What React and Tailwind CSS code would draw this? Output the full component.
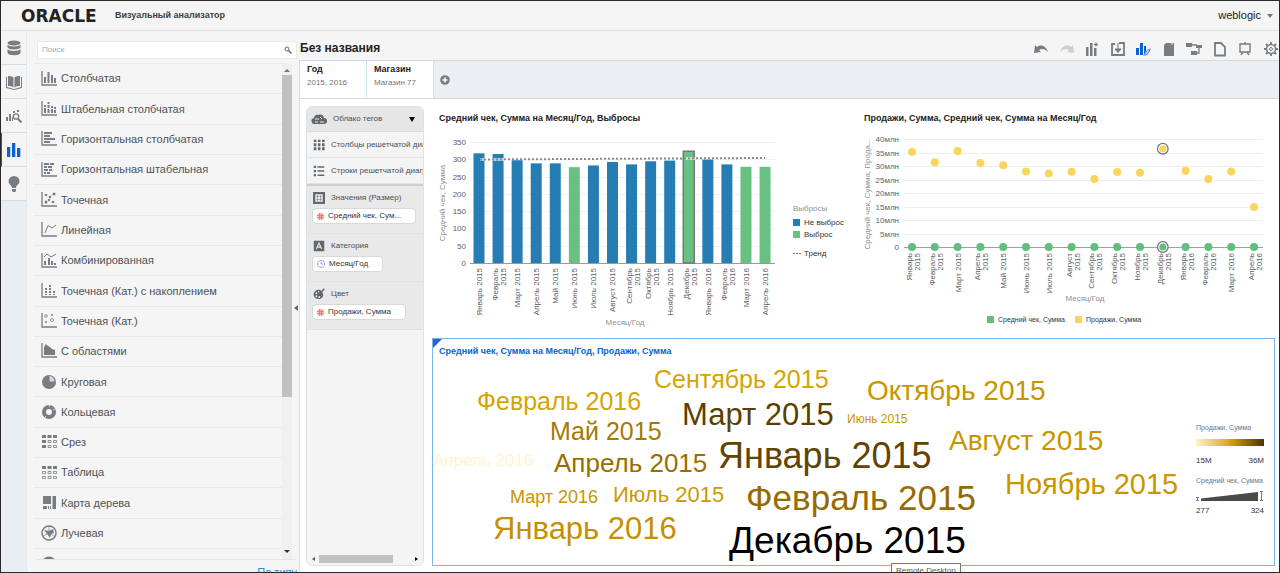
import { useState } from 'react';
import clsx from 'clsx';

const AXIS = <path d="M1 0v14h15" fill="none" stroke="currentColor" strokeWidth="1.3" />;

const ICONS = {
    bar: <>{AXIS}<path d="M3 6h2v6H3zM6.500 1h2v11h-2zM10 4h2v8h-2zM13 7h2v5h-2z" /></>,
    stackedBar: <>{AXIS}<path d="M3 4h2v2H3zM3 7h2v5H3zM6.500 1h2v2h-2zM6.500 4h2v3h-2zM6.500 8h2v4h-2zM10 5h2v2h-2zM10 8h2v4h-2zM13 6h2v2h-2zM13 9h2v3h-2z" /></>,
    hBar: <>{AXIS}<path d="M3 1h8v2H3zM3 4h6v2H3zM3 7h11v2H3zM3 10h6v2H3z" /></>,
    hStackedBar: <>{AXIS}<path d="M3 1h5v2H3zM9 1h4v2H9zM3 4h3v2H3zM7 4h4v2H7zM3 7h4v2H3zM8 7h3v2H8zM3 10h2v2H3zM6 10h3v2H6z" /></>,
    scatter: <>{AXIS}<circle cx="5" cy="3" r="1.300" /><circle cx="9" cy="5" r="1.300" /><circle cx="13" cy="2" r="1.500" /><circle cx="5" cy="10" r="1.500" /><circle cx="8" cy="8" r="1.200" /><circle cx="12" cy="10" r="1.300" /></>,
    line: <>{AXIS}<path d="M4 11 7 3.500 11 6l4-3" fill="none" stroke="currentColor" /></>,
    combo: <>{AXIS}<path d="M3 8h2v4H3zM7 5h2v7H7zM10 8h2v4h-2zM13 10h2v2h-2z" /><path d="m3 4 3-3 4 3 5-3" fill="none" stroke="currentColor" /></>,
    dotStack: <>{AXIS}<path d="M4 5h2v2H4zM4 8h2v2H4zM4 11h2v1H4zM8 2h2v2H8zM8 5h2v2H8zM8 8h2v2H8zM8 11h2v1H8zM12 8h2v2h-2zM12 11h2v1h-2z" /></>,
    dotCat: <>{AXIS}<g fill="none" stroke="currentColor" strokeWidth=".8"><circle cx="5" cy="3" r="1.300" /><circle cx="5" cy="9" r=".8" /><circle cx="11" cy="2" r=".8" /><circle cx="11" cy="7" r="1.500" /></g></>,
    area: <>{AXIS}<path d="M3 12V4l2-3 2 2 2 1 2 2 3 1v5z" /></>,
    pie: <><circle cx="8" cy="8" r="7" /><path d="M8.500 7.500V2a5.500 5.500 0 0 1 5 5.500z" fill="#d5dadc" /></>,
    donut: <><circle cx="8" cy="8" r="5" fill="none" stroke="currentColor" strokeWidth="4" /><path d="m8 3 .5-2M12 6l3-2M5 12l-2 2" stroke="#d5dadc" /></>,
    pivot: <><path d="M1 1h4v3H1zM6.500 1h4v3h-4zM12 1h4v3h-4zM1 6h4v3H1zM1 11h4v3H1z" /><g fill="none" stroke="currentColor" strokeWidth=".8"><path d="M7 6.500h3v2H7zM12.500 6.500h3v2h-3zM7 11.500h3v2H7zM12.500 11.500h3v2h-3z" /></g></>,
    table: <><path d="M1 1h4v3H1zM6.500 1h4v3h-4zM12 1h4v3h-4z" /><g fill="none" stroke="currentColor" strokeWidth=".8"><path d="M1.500 6.500h3v2h-3zM7 6.500h3v2H7zM12.500 6.500h3v2h-3zM1.500 11.500h3v2h-3zM7 11.500h3v2H7zM12.500 11.500h3v2h-3z" /></g></>,
    treemap: <path d="M2 1h8v8H2zM11.500 1H15v13h-3.500zM2 11h4v3H2zM7 11h1v3H7zM9 11h1v3H9z" />,
    radar: <><circle cx="8" cy="8" r="7" fill="none" stroke="currentColor" strokeWidth="1.500" /><path d="m3 5 5 1 4-2 1 4-3 1-1 4-3-4z" /><path d="M8 1v5M2 11l4-2M14 12l-4-3" stroke="currentColor" strokeWidth=".7" /></>,
    map: <circle cx="8" cy="8" r="6" fill="none" stroke="currentColor" strokeWidth="3" />,

    database: <><ellipse cx="8" cy="3" rx="6.500" ry="2.500" /><path d="M1.500 4.500c1 2.500 12 2.500 13 0V7.500c-1 2.500-12 2.500-13 0zM1.500 9c1 2.500 12 2.500 13 0v4c-1 3-12 3-13 0z" /></>,
    book: <><path d="M0 3h1v10l7 2 7-2V3h1v11L8 16l-8-2z" /><path d="M2 2q4-.5 5.500 1.500v10Q6 11.500 2 12zM14 2q-4-.5-5.500 1.500v10Q10 11.500 14 12z" /></>,
    explore: <><path d="M0 9h2v4H0zM3 6h2v7H3zM6 9h1v4H6zM7 3h2v2H7zM11 2h2v2h-2z" /><circle cx="10" cy="8.500" r="2.700" fill="none" stroke="currentColor" strokeWidth="1.300" /><path d="m12 11 3.500 3.500" stroke="currentColor" strokeWidth="2" /></>,
    visuals: <path d="M1 5h3.300v10H1zM6 1h3.300v14H6zM11 6h3.300v9H11z" />,
    bulb: <path d="M8 0a5.500 5.500 0 0 0-5.500 5.500C2.500 8.500 6 9 6 12h4c0-3 3.500-3.500 3.500-6.500A5.500 5.500 0 0 0 8 0zM6 13h4v2l-1 1H7l-1-1z" />,

    undo: <path d="m1 12 1-8 2 2c4-3 9-1 11 5-3-3-6-4-9-2l2 2z" />,
    redo: <path d="m15 12-1-8-2 2C8 3 3 5 1 11c3-3 6-4 9-2l-2 2z" />,
    addVisual: <><path d="M2 6h2.500v9H2zM6 2h2.500v13H6zM10 7h2.500v8H10z" /><path d="M12 1.500v4M10 3.500h4" stroke="currentColor" strokeWidth="1.300" /></>,
    layout: <><path d="M5 3H2v11h12V2H9" fill="none" stroke="currentColor" strokeWidth="1.800" /><path d="M8 2v7M5 8l3 3.500L11 8z" stroke="currentColor" /></>,
    brush: <><path d="M1 7h3v7H1zM5 2h3v12H5zM9 5h2v5l-2 4z" /><path d="M9 14q4-6 6-6-1 4-4 6z" fill="none" stroke="#5d96e0" strokeWidth="1.200" /></>,
    clipboard: <><path d="M3 4l2-2h8v13H3z" /><path d="M6 1h5v3" fill="none" stroke="#f5f5f5" /></>,
    flow: <><path d="M0 2h6v4H0zM10 4h6v3h-6zM5 10h6v4H5z" /><path d="M5 4h6M13 6v6h-3" stroke="currentColor" fill="none" strokeWidth="1.300" /></>,
    page: <path d="M3 2h6l4 4v8.500H3z" fill="none" stroke="currentColor" strokeWidth="1.800" />,
    present: <><path d="M3 3h10v8H3z" fill="none" stroke="currentColor" strokeWidth="1.400" /><path d="M8 1v2M6 11l-2 3M10 11l2 3" stroke="currentColor" strokeWidth="1.400" /></>,
    gear: <><circle cx="8" cy="8" r="4.500" fill="none" stroke="currentColor" strokeWidth="1.500" /><circle cx="8" cy="8" r="1.500" fill="none" stroke="currentColor" /><path d="M8 1v2M8 13v2M1 8h2M13 8h2M3 3l1.500 1.500M11.500 11.500 13 13M13 3l-1.500 1.500M4.500 11.500 3 13" stroke="currentColor" strokeWidth="1.800" /></>,

    cloud: <><path d="M4 13a3 3 0 0 1-1-6 3 3 0 0 1 4-3 4 4 0 0 1 6 3 3 3 0 0 1 0 6z" /><path d="M4 8h4M9 6l2 2M4 11h3M9 11h4" stroke="#e8e8e8" strokeWidth="1" /></>,
    columns: <path d="M1 1h3.500v3H1zM6.500 1H10v3H6.500zM12 1h3.500v3H12zM1 5.500h3.500v4H1zM6.500 5.500H10v4H6.500zM12 5.500h3.500v4H12zM1 11h3.500v4H1zM6.500 11H10v4H6.500zM12 11h3.500v4H12z" />,
    rows: <path d="M1 1h3v3H1zM6 1.500h9v2H6zM1 6.500h3v3H1zM6 7h9v2H6zM1 12h3v3H1zM6 12.500h9v2H6z" />,
    size: <><path d="M1.500 1.500h13v13h-13z" fill="none" stroke="currentColor" strokeWidth="3" /><path d="M6 4v8M10 4v8M4 6h8M4 10h8" stroke="currentColor" strokeWidth=".6" /></>,
    category: <><path d="M1 1h14v14H1z" /><path d="m4.500 12 3.500-8 3.500 8M6 9.500h4" fill="none" stroke="#ececec" strokeWidth="1.400" /></>,
    palette: <><path d="M10 3C5 1 0 5 1 10c1 5 8 6 11 3 2-2 2-4 1-6z" /><path d="m15 1-7 8" stroke="currentColor" strokeWidth="2" /><g fill="#ececec"><circle cx="4.500" cy="7" r="1.200" /><circle cx="4.500" cy="11" r="1.200" /><circle cx="8.500" cy="12" r="1.200" /><circle cx="7.500" cy="5" r="1" /></g></>,
};

function Icon({ name, className }) {
    return (
        <svg viewBox="0 0 16 16" fill="currentColor" className={clsx('shrink-0', className)} aria-hidden="true">
            {ICONS[name]}
        </svg>
    );
}

const RAIL = [
    ['database', 'Данные'],
    ['book', 'Каталог'],
    ['explore', 'Исследование'],
    ['visuals', 'Визуализации'],
    ['bulb', 'Подсказки'],
];

const CHART_TYPES = [
    ['bar', 'Столбчатая'],
    ['stackedBar', 'Штабельная столбчатая'],
    ['hBar', 'Горизонтальная столбчатая'],
    ['hStackedBar', 'Горизонтальная штабельная'],
    ['scatter', 'Точечная'],
    ['line', 'Линейная'],
    ['combo', 'Комбинированная'],
    ['dotStack', 'Точечная (Кат.) с накоплением'],
    ['dotCat', 'Точечная (Кат.)'],
    ['area', 'С областями'],
    ['pie', 'Круговая'],
    ['donut', 'Кольцевая'],
    ['pivot', 'Срез'],
    ['table', 'Таблица'],
    ['treemap', 'Карта дерева'],
    ['radar', 'Лучевая'],
];

const TOOLBAR = ['undo', 'redo', 'addVisual', 'layout', 'brush', 'clipboard', 'flow', 'page', 'present', 'gear'];

// month, year, average check, sales (mln)
const DATA = [
    ['Январь', 2015, 317, 35.2],
    ['Февраль', 2015, 315, 31.4],
    ['Март', 2015, 297, 35.6],
    ['Апрель', 2015, 288, 31.1],
    ['Май', 2015, 288, 30.3],
    ['Июнь', 2015, 277, 28],
    ['Июль', 2015, 282, 27.2],
    ['Август', 2015, 292, 27.9],
    ['Сентябрь', 2015, 285, 25.2],
    ['Октябрь', 2015, 294, 27.8],
    ['Ноябрь', 2015, 296, 27.5],
    ['Декабрь', 2015, 323, 36.4],
    ['Январь', 2016, 299, 28.2],
    ['Февраль', 2016, 285, 25.2],
    ['Март', 2016, 278, 28],
    ['Апрель', 2016, 278, 14.8],
];

const SELECTED = 11;
const OUTLIERS = [5, 11, 14, 15];

// text, x, baseline, size, colour
const CLOUD = [
    ['Сентябрь 2015', 221, 29, 25, '#d6a400'],
    ['Октябрь 2015', 434, 41, 28, '#c89400'],
    ['Февраль 2016', 44, 51, 25, '#d6a400'],
    ['Март 2015', 249, 66, 31, '#5a3f00'],
    ['Июнь 2015', 414, 64, 12, '#c89400'],
    ['Май 2015', 117, 81, 25, '#a87800'],
    ['Январь 2015', 285, 109, 36, '#604400'],
    ['Август 2015', 516, 91, 28, '#c89400'],
    ['Апрель 2016', 0, 107, 17, '#fff3d0'],
    ['Апрель 2015', 121, 113, 26, '#9a6e00'],
    ['Март 2016', 77, 144, 18, '#c89400'],
    ['Июль 2015', 180, 143, 22, '#cc9900'],
    ['Февраль 2015', 313, 151, 35, '#966b00'],
    ['Ноябрь 2015', 572, 135, 29, '#c99500'],
    ['Январь 2016', 60, 180, 31, '#c68f00'],
    ['Декабрь 2015', 296, 194, 37, '#000000'],
];

function MonthLabel({ x, y, month, year, wrap }) {
    if (!wrap) {
        return (
            <text transform={`translate(${x + 3} ${y}) rotate(-90)`} textAnchor="end">{month} {year}</text>
        );
    }
    return (
        <g transform={`translate(${x} ${y}) rotate(-90)`} textAnchor="end">
            <text>{month}</text>
            <text y="8">{year}</text>
        </g>
    );
}

function BarChart() {
    const y = (v) => 135 - v * 0.346;
    const x = (i) => 47 + i * 19.07;
    const wrapped = [1, 8, 9, 11, 13];

    return (
        <svg viewBox="0 0 425 206" className="block w-full" fontSize="8" fill="#5c6166">
            {[0, 50, 100, 150, 200, 250, 300, 350].map((v) => (
                <g key={v}>
                    <path d={`M38 ${Math.round(y(v)) + 0.5}H343`} stroke={v ? '#eef1f3' : '#9a9a9a'} />
                    <text x="34" y={y(v) + 3} textAnchor="end">{v}</text>
                </g>
            ))}
            {DATA.map(([month, year, check], i) => (
                <g key={i}>
                    <rect
                        x={x(i) - 5.5}
                        y={y(check)}
                        width="11"
                        height={135 - y(check)}
                        fill={OUTLIERS.includes(i) ? '#68c182' : '#267db3'}
                        stroke={i === SELECTED ? '#777777' : 'none'}
                        strokeWidth="1.5"
                    />
                    <MonthLabel x={x(i)} y={140} month={month} year={year} wrap={wrapped.includes(i)} />
                </g>
            ))}
            <path d="M48 31.500h29M253 30.500h10" stroke="#ffffff" strokeWidth="3" opacity=".6" />
            <path d="M48 31.500 333 30" stroke="#8a8a8a" strokeWidth="2" strokeDasharray="2 2" />
            <g fill="#8d9297">
                <text x="193" y="197" textAnchor="middle">Месяц/Год</text>
                <text transform="translate(13 75) rotate(-90)" textAnchor="middle">Средний чек, Сумма</text>
                <text x="361" y="83">Выбросы</text>
            </g>
            <g fill="#333333">
                <rect x="361" y="91" width="7" height="7" fill="#267db3" />
                <text x="372" y="97">Не выброс</text>
                <rect x="361" y="103" width="7" height="7" fill="#68c182" />
                <text x="372" y="109">Выброс</text>
                <path d="M361 125.500h8" stroke="#777777" strokeDasharray="2 1" />
                <text x="372" y="128">Тренд</text>
            </g>
        </svg>
    );
}

function DotChart() {
    const y = (v) => 119 - v * 2.7;
    const x = (i) => 55 + i * 22.8;
    const single = [2, 4, 5, 6, 14];

    return (
        <svg viewBox="0 0 418 206" className="block w-full" fontSize="8" fill="#5c6166">
            {[0, 5, 10, 15, 20, 25, 30, 35, 40].map((v) => (
                <g key={v}>
                    <path d={`M47 ${Math.round(y(v)) + 0.5}H406`} stroke={v ? '#eaeff2' : '#a0a0a0'} />
                    <text x="42" y={y(v) + 3} textAnchor="end">{v ? `${v}млн` : 0}</text>
                </g>
            ))}
            {DATA.map(([month, year, , sales], i) => (
                <g key={i}>
                    {i === SELECTED && (
                        <g fill="#ffffff" stroke="#777777" strokeWidth="1.3">
                            <circle cx={x(i)} cy={y(sales)} r="5.3" />
                            <circle cx={x(i)} cy="119" r="5.3" />
                        </g>
                    )}
                    <circle cx={x(i)} cy={y(sales)} r={i === SELECTED ? 3.5 : 4} fill="#fad55c" />
                    <circle cx={x(i)} cy="119" r={i === SELECTED ? 3.5 : 4} fill="#5fbf7b" />
                    <MonthLabel x={x(i)} y={125} month={month} year={year} wrap={!single.includes(i)} />
                </g>
            ))}
            <g fill="#8d9297">
                <text x="228" y="173" textAnchor="middle">Месяц/Год</text>
                <text transform="translate(13 66) rotate(-90)" textAnchor="middle">Средний чек, Сумма, Прода...</text>
            </g>
            <g fill="#333333" fontSize="7">
                <rect x="130" y="188" width="7" height="7" fill="#5fbf7b" />
                <text x="141" y="194">Средний чек, Сумма</text>
                <rect x="218" y="188" width="7" height="7" fill="#fad55c" />
                <text x="229" y="194">Продажи, Сумма</text>
            </g>
        </svg>
    );
}

function TagCloud() {
    return (
        <section className="relative flex min-h-0 flex-1 flex-col border border-[#7cb5ea]">
            <svg viewBox="0 0 9 9" className="absolute left-0 top-0 size-[9px]" aria-hidden="true">
                <path d="M0 0h9L0 9z" fill="#2b63d3" />
            </svg>
            <h2 className="px-1.5 pt-1.5 text-[9px] leading-3 font-bold text-[#0b62c4]">
                Средний чек, Сумма на Месяц/Год, Продажи, Сумма
            </h2>
            <div className="flex min-h-0 flex-1 pt-0.5">
                <svg viewBox="0 0 763 205" preserveAspectRatio="xMidYMin meet" className="h-full min-w-0 flex-1">
                    {CLOUD.map(([text, x, y, size, color]) => (
                        <text key={text} x={x} y={y} fontSize={size} fill={color}>{text}</text>
                    ))}
                </svg>
                <div className="w-[78px] shrink-0 pt-16 text-[7px] leading-[10px] text-[#333333]">
                    <p className="text-[#6f757a]">Продажи, Сумма</p>
                    <div className="mt-1.5 h-[7px] w-[68px] bg-linear-to-r from-[#fff3c4] via-[#d6a400] to-[#4d3600]" />
                    <div className="mt-2.5 flex w-[68px] justify-between text-[8px]"><span>15M</span><span>36M</span></div>
                    <p className="mt-2.5 whitespace-nowrap text-[#6f757a]">Средний чек, Сумма</p>
                    <svg viewBox="0 0 68 12" className="mt-1 h-3 w-[68px]" aria-hidden="true">
                        <path d="M5 8.500 62 2v9H5z" fill="#4a4a4a" />
                        <path d="M0 7.500h3M0 10.500h3M1.500 7.500v3M64 1.500h3M64 10.500h3M65.500 1.500v9" stroke="#7a7a96" />
                    </svg>
                    <div className="mt-1 flex w-[68px] justify-between text-[8px]"><span>277</span><span>324</span></div>
                </div>
            </div>
        </section>
    );
}

function DropZone({ icon, label, field, children }) {
    return (
        <div className="h-12 border-b border-[#e0e4e7] bg-[#e9e9e9] px-1.5 pt-1.5">
            <div className="flex items-center gap-1.5 text-[8px] leading-3 text-[#4a4f55]">
                <Icon name={icon} className="size-3 text-[#62686d]" />
                {label}
            </div>
            <button className="mt-1 -ml-px flex h-4 items-center gap-1 rounded-sm border border-[#d9d9d9] bg-white pr-3.5 pl-1 text-[8px] whitespace-nowrap text-[#333333]">
                {children}
                {field}
            </button>
        </div>
    );
}

const Measure = () => (
    <svg viewBox="0 0 7 7" className="size-[7px]" aria-hidden="true">
        <path d="M.5.5h6v6h-6z" fill="#f8b4a8" />
        <path d="M2.500 0v7M4.500 0v7M0 2.500h7M0 4.500h7" stroke="#f0705c" strokeWidth=".8" />
    </svg>
);

const Clock = () => (
    <svg viewBox="0 0 8 8" className="size-2" aria-hidden="true">
        <path d="M4 2v2h2M4 .5a3.500 3.500 0 1 0 .01 0z" fill="none" stroke="#a78bda" strokeWidth=".9" />
    </svg>
);

const Arrow = ({ d, className }) => (
    <svg viewBox="0 0 6 6" fill="currentColor" className={clsx('size-1.5 shrink-0', className)} aria-hidden="true">
        <path d={d} />
    </svg>
);

function GrammarPanel() {
    return (
        <aside className="flex w-[118px] shrink-0 flex-col overflow-hidden rounded-md border border-[#dde4e9] bg-[#f4f4f4]">
            <button className="flex h-[25px] shrink-0 items-center border-b border-[#dcdcdc] bg-[#e6e6e6] px-1 text-[8px] text-[#4a4f55]">
                <Icon name="cloud" className="size-4 text-[#62686d]" />
                <span className="ml-1.5 flex-1 text-left">Облако тегов</span>
                <Arrow d="M0 1h6L3 6z" className="mr-1 text-black" />
            </button>
            {[['columns', 'Столбцы решетчатой диаграммы'], ['rows', 'Строки решетчатой диаграммы']].map(([icon, label]) => (
                <div key={icon} className="flex h-[26px] shrink-0 items-center gap-1.5 overflow-hidden border-b border-[#dfe4e8] px-1.5 text-[8px] whitespace-nowrap text-[#4a4f55]">
                    <Icon name={icon} className="size-3 text-[#62686d]" />
                    {label}
                </div>
            ))}
            <div className="h-0.5 shrink-0 bg-[#cfcfcf]" />
            <DropZone icon="size" label="Значения (Размер)" field="Средний чек, Сум..."><Measure /></DropZone>
            <DropZone icon="category" label="Категория" field="Месяц/Год"><Clock /></DropZone>
            <DropZone icon="palette" label="Цвет" field="Продажи, Сумма"><Measure /></DropZone>
            <div className="flex-1" />
            <div className="flex h-3 shrink-0 items-center px-1 text-[#555555]">
                <Arrow d="M4 1v4L1 3z" />
                <div className="ml-0.5 h-2 w-[74px] bg-[#c1c1c1]" />
                <Arrow d="M2 1v4l3-2z" className="ml-auto text-black" />
            </div>
        </aside>
    );
}

export default function App() {
    const [tab, setTab] = useState('visuals');

    return (
        <div className="relative flex h-screen flex-col overflow-hidden border border-[#2b2829] bg-[#f5f5f5] font-['Liberation_Sans',Arial,sans-serif] text-[#222222]">
            <header className="flex h-[30px] shrink-0 items-center border-b border-[#dcdfe1] pl-5 pr-1.5">
                <span className="w-[84px] font-['DejaVu_Sans',sans-serif] text-[17px] leading-4 font-bold">ORACLE</span>
                <h1 className="ml-2.5 flex-1 text-[9px] font-bold text-[#3c4045]">Визуальный анализатор</h1>
                <button className="flex items-center gap-1.5 text-[11px] text-[#222222]">
                    weblogic
                    <Arrow d="M0 1h6L3 5z" className="text-[#777777]" />
                </button>
            </header>

            <div className="flex min-h-0 flex-1">
                <nav className="w-[26px] shrink-0 border-r border-[#e3e8ec] bg-[#e9eef2]">
                    {RAIL.map(([icon, label]) => (
                        <button
                            key={icon}
                            aria-label={label}
                            onClick={() => setTab(icon)}
                            className={clsx(
                                'flex h-[34px] w-full items-center justify-center border-b border-b-[#d3dde4] bg-[#f5f5f5]',
                                tab === icon ? 'border-l border-l-[#0b62c4] text-[#0b62d0]' : 'text-[#777d82]',
                            )}
                        >
                            <Icon name={icon} className="size-4" />
                        </button>
                    ))}
                </nav>

                <div className="flex w-[272px] shrink-0 flex-col">
                    <label className="mt-2.5 mr-0.5 ml-2.5 flex h-[18px] shrink-0 items-center border border-[#e6ebee] bg-white px-1">
                        <input
                            type="search"
                            aria-label="Поиск"
                            placeholder="Поиск"
                            className="min-w-0 flex-1 text-[8px] outline-none placeholder:text-[#a8abad]"
                        />
                        <svg viewBox="0 0 8 8" className="size-2" fill="none" stroke="#666666" aria-hidden="true">
                            <circle cx="3" cy="3" r="2" />
                            <path d="m4.500 4.500 3 3" strokeWidth="1.500" />
                        </svg>
                    </label>
                    <div className="mt-1 flex min-h-0 flex-1 pl-[7px]">
                        <ul className="flex min-w-0 flex-1 flex-col border-t border-[#e3e9ec]">
                            {CHART_TYPES.map(([icon, label]) => (
                                <li key={label} className="flex min-h-0 flex-1 border-b border-[#e3e9ec]">
                                    <button className="flex flex-1 items-center gap-1 pl-[7px] text-[11px] text-[#4d5257]">
                                        <Icon name={icon} className="size-4 text-[#777d82]" />
                                        {label}
                                    </button>
                                </li>
                            ))}
                            <li className="h-2.5 shrink-0 overflow-hidden pt-[7px] pl-[7px]">
                                <Icon name="map" className="size-4 text-[#777d82]" />
                            </li>
                        </ul>
                        <div className="mr-[7px] flex w-[10px] flex-col items-center bg-[#f0f0f0] py-1 text-[#777777]">
                            <Arrow d="M0 5h6L3 2z" />
                            <div className="mt-0.5 h-[322px] w-full bg-[#c1c1c1]" />
                            <Arrow d="M0 1h6L3 4z" className="mt-auto text-[#333333]" />
                        </div>
                    </div>
                    <div className="mr-0.5 ml-2.5 flex h-[13px] shrink-0 justify-end overflow-hidden border-t border-[#e0e6ea] pt-1">
                        <a href="#type" className="text-[11px] leading-4 text-[#2a8ae2]">По типу</a>
                    </div>
                </div>

                <main className="relative flex min-w-0 flex-1 flex-col">
                    <button aria-label="Свернуть панель" className="absolute top-[274px] -left-1.5 text-[#666666]">
                        <Arrow d="M5 0v6L1 3z" />
                    </button>
                    <div className="flex h-[29px] shrink-0 items-center justify-between pt-1.5">
                        <h2 className="pb-0.5 pl-px text-xs font-bold">Без названия</h2>
                        <div className="flex w-[246px] justify-between text-[#777d82]">
                            {TOOLBAR.map((name) => (
                                <button
                                    key={name}
                                    aria-label={name}
                                    className={clsx(name === 'brush' && 'text-[#0b62d0]', name === 'redo' && 'text-[#cfcfcf]')}
                                >
                                    <Icon name={name} className="size-4" />
                                </button>
                            ))}
                        </div>
                    </div>
                    <div className="flex h-[39px] shrink-0 border border-r-0 border-[#cfdbe4] bg-[#ebeff2]">
                        {[['Год', '2015, 2016'], ['Магазин', 'Магазин 77']].map(([name, value]) => (
                            <button key={name} className="w-[67px] border-r border-[#d5dfe6] bg-white px-[7px] pb-2 text-left text-[9px] leading-[13px]">
                                <span className="block font-bold">{name}</span>
                                <span className="block text-[8px] text-[#6f757a]">{value}</span>
                            </button>
                        ))}
                        <button aria-label="Добавить фильтр" className="ml-1.5">
                            <svg viewBox="0 0 10 10" className="size-2.5" aria-hidden="true">
                                <circle cx="5" cy="5" r="4.800" fill="#777d82" />
                                <path d="M5 2.500v5M2.500 5h5" stroke="#ffffff" strokeWidth="1.600" />
                            </svg>
                        </button>
                    </div>
                    <div className="flex min-h-0 flex-1 gap-2 border-l border-[#d5dfe6] bg-white pt-[7px] pr-1 pb-1.5 pl-1.5">
                        <GrammarPanel />
                        <div className="flex min-w-0 flex-1 flex-col">
                            <div className="grid shrink-0 grid-cols-[425fr_418fr]">
                                <section>
                                    <h2 className="px-[7px] pt-1.5 pb-1 text-[9px] leading-3 font-bold">Средний чек, Сумма на Месяц/Год, Выбросы</h2>
                                    <BarChart />
                                </section>
                                <section>
                                    <h2 className="px-[7px] pt-1.5 pb-1 text-[9px] leading-3 font-bold">Продажи, Сумма, Средний чек, Сумма на Месяц/Год</h2>
                                    <DotChart />
                                </section>
                            </div>
                            <div className="flex min-h-0 flex-1 flex-col pt-1">
                                <TagCloud />
                            </div>
                        </div>
                    </div>
                </main>
            </div>

            <div className="absolute -bottom-1.5 left-[890px] border border-[#777777] bg-white px-1 text-[8px] leading-[13px] text-[#555555]">
                Remote Desktop
            </div>
        </div>
    );
}
